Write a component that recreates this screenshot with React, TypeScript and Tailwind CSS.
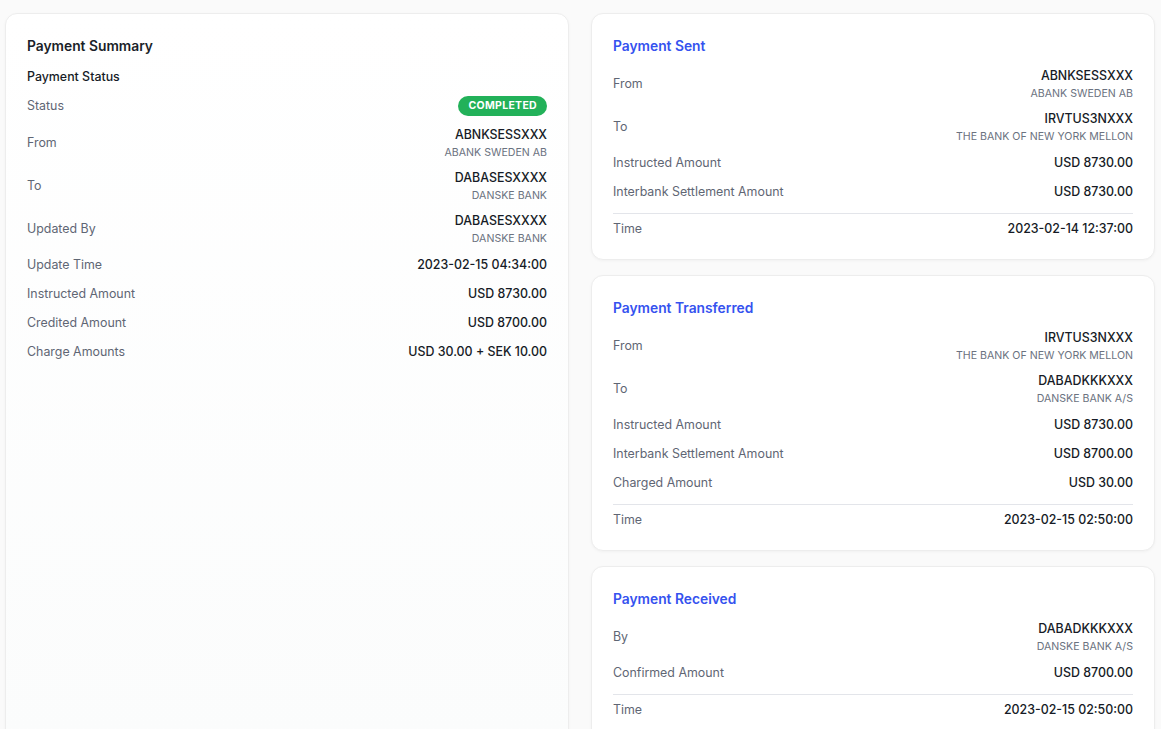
import React from 'react';

type Row = {
  label: string;
  value?: string;
  sub?: string;
  badge?: string;
};

type Card = {
  title: string;
  rows: Row[];
  time: string;
};

const summaryRows: Row[] = [
  { label: 'Status', badge: 'COMPLETED' },
  { label: 'From', value: 'ABNKSESSXXX', sub: 'ABANK SWEDEN AB' },
  { label: 'To', value: 'DABASESXXXX', sub: 'DANSKE BANK' },
  { label: 'Updated By', value: 'DABASESXXXX', sub: 'DANSKE BANK' },
  { label: 'Update Time', value: '2023-02-15 04:34:00' },
  { label: 'Instructed Amount', value: 'USD 8730.00' },
  { label: 'Credited Amount', value: 'USD 8700.00' },
  { label: 'Charge Amounts', value: 'USD 30.00 + SEK 10.00' },
];

const events: Card[] = [
  {
    title: 'Payment Sent',
    rows: [
      { label: 'From', value: 'ABNKSESSXXX', sub: 'ABANK SWEDEN AB' },
      { label: 'To', value: 'IRVTUS3NXXX', sub: 'THE BANK OF NEW YORK MELLON' },
      { label: 'Instructed Amount', value: 'USD 8730.00' },
      { label: 'Interbank Settlement Amount', value: 'USD 8730.00' },
    ],
    time: '2023-02-14 12:37:00',
  },
  {
    title: 'Payment Transferred',
    rows: [
      { label: 'From', value: 'IRVTUS3NXXX', sub: 'THE BANK OF NEW YORK MELLON' },
      { label: 'To', value: 'DABADKKKXXX', sub: 'DANSKE BANK A/S' },
      { label: 'Instructed Amount', value: 'USD 8730.00' },
      { label: 'Interbank Settlement Amount', value: 'USD 8700.00' },
      { label: 'Charged Amount', value: 'USD 30.00' },
    ],
    time: '2023-02-15 02:50:00',
  },
  {
    title: 'Payment Received',
    rows: [
      { label: 'By', value: 'DABADKKKXXX', sub: 'DANSKE BANK A/S' },
      { label: 'Confirmed Amount', value: 'USD 8700.00' },
    ],
    time: '2023-02-15 02:50:00',
  },
];

const InfoRow: React.FC<{ row: Row }> = ({ row }) => (
  <div className={`flex items-center justify-between gap-4 ${row.badge ? 'mb-[1px]' : ''}`}>
    <span className="text-[12.4px] leading-[21px] text-[#5f6674]">{row.label}</span>
    {row.badge ? (
      <span className="rounded-full bg-[#22b159] px-[10px] text-[10.5px] font-bold leading-[20px] tracking-[0.03em] text-white">
        {row.badge}
      </span>
    ) : (
      <div className="flex flex-col items-end">
        <span className="text-[12.4px] font-medium leading-[20px] text-[#161b26]">{row.value}</span>
        {row.sub && (
          <span className="text-[10.6px] leading-[15px] text-[#6b7280]">{row.sub}</span>
        )}
      </div>
    )}
  </div>
);

const EventCard: React.FC<{ card: Card }> = ({ card }) => (
  <div className="rounded-xl border border-[#ededed] bg-white px-[21px] py-5 shadow-[0_1px_3px_rgba(0,0,0,0.04)]">
    <div className="flex flex-col gap-2">
      <h3 className="text-[13.8px] font-semibold leading-6 text-[#3552ef]">{card.title}</h3>
      {card.rows.map((r) => (
        <InfoRow key={r.label} row={r} />
      ))}
      <div className="mt-[3px] border-t border-[#e3e5ea] pt-[4px]">
        <InfoRow row={{ label: 'Time', value: card.time }} />
      </div>
    </div>
  </div>
);

export default function App() {
  return (
    <div
      className="min-h-screen bg-[#fafafa] pl-[5px] pr-[6px] pt-[13px]"
      style={{ fontFamily: 'Inter, "Noto Sans", sans-serif' }}
    >
      <div className="grid grid-cols-2 gap-[22px]">
        <div className="rounded-xl border border-[#ededed] bg-gradient-to-b from-white to-[#fbfcfc] px-[21px] py-5 shadow-[0_1px_3px_rgba(0,0,0,0.04)]">
          <div className="flex flex-col gap-2">
            <h2 className="text-[13.8px] font-semibold leading-6 text-[#1b1f29]">Payment Summary</h2>
            <h4 className="text-[12.4px] font-medium leading-[21px] text-[#161b26]">Payment Status</h4>
            {summaryRows.map((r) => (
              <InfoRow key={r.label} row={r} />
            ))}
          </div>
        </div>
        <div className="flex flex-col gap-[15px]">
          {events.map((c) => (
            <EventCard key={c.title} card={c} />
          ))}
        </div>
      </div>
    </div>
  );
}
